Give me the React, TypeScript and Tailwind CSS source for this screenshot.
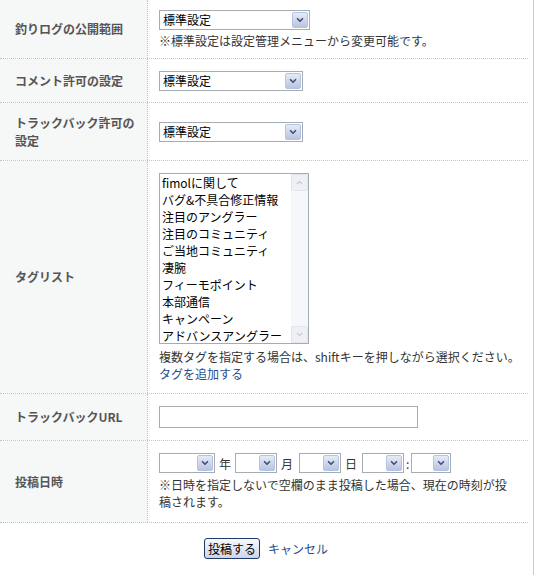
import { ChevronDown, ChevronUp } from 'lucide-react';

const font = { fontFamily: '"Noto Sans CJK JP", "Noto Sans", sans-serif' };

const tags = [
  'fimolに関して',
  'バグ&不具合修正情報',
  '注目のアングラー',
  '注目のコミュニティ',
  'ご当地コミュニティ',
  '凄腕',
  'フィーモポイント',
  '本部通信',
  'キャンペーン',
  'アドバンスアングラー',
];

function FakeSelect({ value, width }: { value?: string; width: string }) {
  return (
    <div className={`inline-flex h-[20px] shrink-0 items-stretch border border-[#a5acb2] bg-white ${width}`}>
      <span className="flex-1 truncate pl-[3px] text-[12px] leading-[18px] text-black">{value}</span>
      <span className="my-[1px] mr-[1px] flex w-[16px] items-center justify-center rounded-[2px] border border-[#b3c3e6] bg-gradient-to-b from-[#e6ebf7] to-[#b9c4de]">
        <ChevronDown size={10} strokeWidth={4} className="text-[#3f5178]" />
      </span>
    </div>
  );
}

function Row({ label, className, children }: { label: string; className: string; children: React.ReactNode }) {
  return (
    <div className={`flex border-b border-dotted border-[#c4c4c4] ${className}`}>
      <div className="flex w-[148px] shrink-0 items-center border-r border-dotted border-[#c4c4c4] bg-[#f6f7f7] pl-[15px] pr-[10px] text-[12px] font-bold leading-[18px] text-[#555]">
        {label}
      </div>
      <div className="flex flex-1 items-center pl-[11px]">
        <div className="flex flex-col">{children}</div>
      </div>
    </div>
  );
}

export default function App() {
  return (
    <div className="h-[575px] w-[543px] bg-white" style={font}>
      <div className="h-full w-[534px] border-r border-[#c8c8c8]">
        <div className="w-[528px]">
          <Row label="釣りログの公開範囲" className="h-[59px]">
            <FakeSelect value="標準設定" width="w-[151px]" />
            <p className="mt-[2px] text-[12px] leading-[17px] text-[#333]">※標準設定は設定管理メニューから変更可能です。</p>
          </Row>
          <Row label="コメント許可の設定" className="h-[44px]">
            <FakeSelect value="標準設定" width="w-[144px]" />
          </Row>
          <Row label="トラックバック許可の設定" className="h-[58px]">
            <FakeSelect value="標準設定" width="w-[144px]" />
          </Row>
          <Row label="タグリスト" className="h-[233px]">
            <div className="flex h-[171px] w-[150px] border border-[#a5acb2] bg-white">
              <ul className="flex-1 overflow-hidden pl-[2px] text-[12px] leading-[17px] text-black">
                {tags.map((t) => (
                  <li key={t} className="whitespace-nowrap">{t}</li>
                ))}
              </ul>
              <div className="flex w-[17px] flex-col justify-between bg-[#f6f7fb]">
                <span className="flex h-[17px] items-center justify-center rounded-[2px] border border-[#e2e5ee] bg-[#eef0f5]">
                  <ChevronUp size={9} strokeWidth={3} className="text-[#c2c8d6]" />
                </span>
                <span className="flex h-[17px] items-center justify-center rounded-[2px] border border-[#e2e5ee] bg-[#eef0f5]">
                  <ChevronDown size={9} strokeWidth={3} className="text-[#c2c8d6]" />
                </span>
              </div>
            </div>
            <p className="mt-[4px] text-[12px] leading-[17px] text-[#333]">複数タグを指定する場合は、shiftキーを押しながら選択ください。</p>
            <a className="text-[12px] leading-[17px] text-[#1f4f8c]">タグを追加する</a>
          </Row>
          <Row label="トラックバックURL" className="h-[47px]">
            <div className="h-[22px] w-[259px] border border-[#a5acb2] bg-white" />
          </Row>
          <Row label="投稿日時" className="h-[82px]">
            <div className="flex items-center text-[12px] leading-[17px] text-[#333]">
              <FakeSelect width="w-[56px]" />
              <span className="ml-[4px] mr-[4px]">年</span>
              <FakeSelect width="w-[42px]" />
              <span className="ml-[4px] mr-[6px]">月</span>
              <FakeSelect width="w-[42px]" />
              <span className="ml-[4px] mr-[5px]">日</span>
              <FakeSelect width="w-[42px]" />
              <span className="mx-[2px]">:</span>
              <FakeSelect width="w-[40px]" />
            </div>
            <p className="mt-[3px] w-[352px] text-[12px] leading-[17px] text-[#333]">
              ※日時を指定しないで空欄のまま投稿した場合、現在の時刻が投稿されます。
            </p>
          </Row>
          <div className="flex items-center justify-center gap-[8px] pt-[15px] pl-[4px]">
            <button className="h-[21px] rounded-[3px] border border-[#1c3b6b] bg-gradient-to-b from-[#f8f9fc] to-[#cdd5e6] px-[3px] text-[12px] leading-[17px] text-black">
              投稿する
            </button>
            <span className="text-[12px] text-[#1f4f8c]">キャンセル</span>
          </div>
        </div>
      </div>
    </div>
  );
}
